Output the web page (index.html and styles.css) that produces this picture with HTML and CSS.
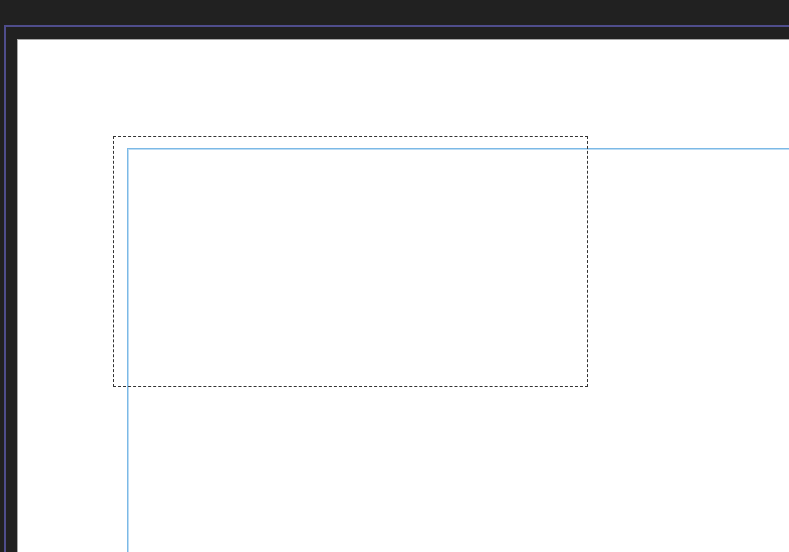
FILE: index.html
```html
<!DOCTYPE html>
<html lang="en">
<head>
  <meta charset="UTF-8">
  <title>Canvas</title>
  <link rel="stylesheet" href="styles.css">
</head>
<body>
  <div class="workspace">
    <div class="frame">
      <div class="canvas">
        <div class="marquee"></div>
        <div class="artboard"></div>
      </div>
    </div>
  </div>
</body>
</html>
```

FILE: styles.css
```css
html, body {
  margin: 0;
  height: 100%;
  overflow: hidden;
  background: #212121;
}
.workspace {
  height: 100%;
  padding: 25px 0 0 4px;
  box-sizing: border-box;
}
.frame {
  height: 100%;
  box-sizing: border-box;
  border-top: 2px solid #4f4d8c;
  border-left: 2px solid #4f4d8c;
  padding: 12px 0 0 11px;
}
.canvas {
  position: relative;
  height: 100%;
  box-sizing: border-box;
  background: #fff;
  border-top: 1px solid #a8a8a8;
  border-left: 1px solid #a8a8a8;
  padding: 108px 0 0 109px;
}
.artboard {
  height: 100%;
  border-top: 1px solid #7cb9e6;
  border-left: 1px solid #7cb9e6;
  box-shadow: inset 1px 1px 0 #bcdcf4;
}
.marquee {
  position: absolute;
  left: 95px;
  top: 96px;
  width: 473px;
  height: 249px;
  border: 1px dashed #333;
  z-index: 1;
}
```
